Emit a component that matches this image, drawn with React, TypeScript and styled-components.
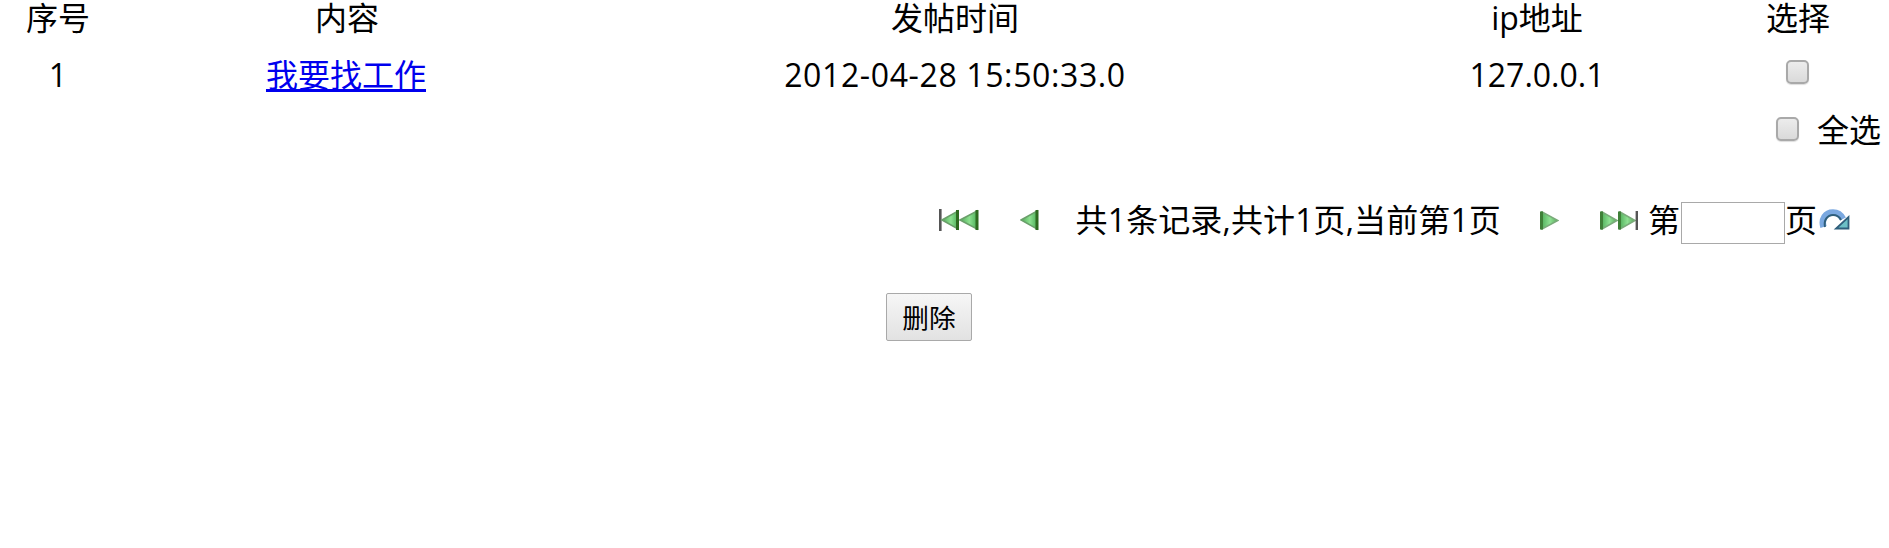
import styled, { createGlobalStyle } from 'styled-components';

const GlobalStyle = createGlobalStyle`
  body {
    margin: 0;
    background: #fff;
    color: #000;
    font-family: 'Open Sans', 'Noto Sans CJK SC', sans-serif;
    font-size: 32px;
  }
`;

const rows = [{ id: 1, title: '我要找工作', time: '2012-04-28 15:50:33.0', ip: '127.0.0.1' }];

function IconDefs() {
  return (
    <svg width="0" height="0" style={{ position: 'absolute' }}>
      <defs>
        <linearGradient id="triLeft" x1="0" y1="0" x2="1" y2="0">
          <stop offset="0" stopColor="#4fa958" />
          <stop offset="0.55" stopColor="#8ce08f" />
          <stop offset="1" stopColor="#4fb05a" />
        </linearGradient>
        <linearGradient id="triRight" x1="0" y1="0" x2="1" y2="0">
          <stop offset="0" stopColor="#55b35f" />
          <stop offset="0.5" stopColor="#8ee092" />
          <stop offset="1" stopColor="#58a95c" />
        </linearGradient>
      </defs>
    </svg>
  );
}

function FirstIcon() {
  return (
    <svg width="40" height="22" viewBox="0 0 40 22">
      <rect x="0" y="0" width="2.6" height="22" fill="#555" />
      <path d="M3 11 L19 2 V20 Z" fill="url(#triLeft)" stroke="#6a9f6a" strokeWidth="1.6" />
      <path d="M21 11 L38 2 V20 Z" fill="url(#triLeft)" stroke="#6a9f6a" strokeWidth="1.6" />
      <rect x="17" y="1" width="3" height="20" fill="#2d6a1f" />
      <rect x="36.5" y="1" width="3" height="20" fill="#2d6a1f" />
    </svg>
  );
}

function PrevIcon() {
  return (
    <svg width="19" height="22" viewBox="0 0 19 22">
      <path d="M1 11 L17 2 V20 Z" fill="url(#triLeft)" stroke="#6a9f6a" strokeWidth="1.6" />
      <rect x="15.5" y="1" width="3" height="20" fill="#2d6a1f" />
    </svg>
  );
}

function NextIcon() {
  return (
    <svg width="19" height="19" viewBox="0 0 19 19">
      <path d="M2 1 L18 9.5 L2 18 Z" fill="url(#triRight)" stroke="#7aab7a" strokeWidth="1.6" />
      <rect x="0" y="0.5" width="3" height="18" fill="#3f8038" />
    </svg>
  );
}

function LastIcon() {
  return (
    <svg width="38" height="19" viewBox="0 0 38 19">
      <path d="M2 1 L17 9.5 L2 18 Z" fill="url(#triRight)" stroke="#7aab7a" strokeWidth="1.6" />
      <rect x="0" y="0.5" width="3" height="18" fill="#3f8038" />
      <path d="M20 1 L35 9.5 L20 18 Z" fill="url(#triRight)" stroke="#7aab7a" strokeWidth="1.6" />
      <rect x="18" y="0.5" width="3" height="18" fill="#3f8038" />
      <rect x="35.6" y="0" width="2.4" height="19" fill="#555" />
    </svg>
  );
}

function GoIcon() {
  return (
    <svg width="31" height="22" viewBox="0 0 31 22">
      <path
        d="M4.5 18 C2 10 6.5 3.5 14 3.5 C19 3.5 22 6 24 10"
        fill="none"
        stroke="#7aa8e0"
        strokeWidth="6.5"
      />
      <path
        d="M6 18 C4.5 11 8.5 6 14 6 C18 6 20.5 8 22 11"
        fill="none"
        stroke="#2f5f7c"
        strokeWidth="2"
      />
      <path d="M17 19.5 H29.5 V8 Z" fill="#6cc0c6" stroke="#2f5f7c" strokeWidth="1.8" />
    </svg>
  );
}

export default function App() {
  return (
    <Page>
      <GlobalStyle />
      <IconDefs />
      <ListTable>
        <thead>
          <tr>
            <HeadCell $width={100}>序号</HeadCell>
            <HeadCell $width={478}>内容</HeadCell>
            <HeadCell $width={738}>发帖时间</HeadCell>
            <HeadCell $width={426}>ip地址</HeadCell>
            <HeadCell $width={96}>选择</HeadCell>
          </tr>
        </thead>
        <tbody>
          {rows.map((row) => (
            <tr key={row.id}>
              <BodyCell>{row.id}</BodyCell>
              <BodyCell>
                <TitleLink href="#">{row.title}</TitleLink>
              </BodyCell>
              <TimeCell>{row.time}</TimeCell>
              <BodyCell>{row.ip}</BodyCell>
              <BodyCell>
                <RowCheckBox type="checkbox" />
              </BodyCell>
            </tr>
          ))}
        </tbody>
      </ListTable>
      <SelectAllRow>
        <CheckBox type="checkbox" />
        <SelectAllLabel>全选</SelectAllLabel>
      </SelectAllRow>
      <Pager>
        <PagerIcon $left={0}>
          <FirstIcon />
        </PagerIcon>
        <PagerIcon $left={41}>
          <PrevIcon />
        </PagerIcon>
        <PagerText>共1条记录,共计1页,当前第1页</PagerText>
        <PagerIcon $left={0}>
          <NextIcon />
        </PagerIcon>
        <PagerIcon $left={41}>
          <LastIcon />
        </PagerIcon>
        <PageWord $left={10}>第</PageWord>
        <PageInput type="text" />
        <PageWord $left={0}>页</PageWord>
        <PagerIcon $left={2}>
          <GoIcon />
        </PagerIcon>
      </Pager>
      <Actions>
        <DeleteButton type="button">删除</DeleteButton>
      </Actions>
    </Page>
  );
}

const Page = styled.div`
  width: 1889px;
  height: 548px;
  padding: 0 8px;
  box-sizing: border-box;
  overflow: hidden;
`;

const ListTable = styled.table`
  border-collapse: collapse;
  table-layout: fixed;
  width: 1838px;
`;

const HeadCell = styled.th<{ $width: number }>`
  width: ${({ $width }) => $width}px;
  height: 36px;
  padding: 0;
  font-weight: 400;
  line-height: 36px;
  text-align: center;
`;

const BodyCell = styled.td`
  height: 78px;
  padding: 0;
  line-height: 42px;
  text-align: center;
`;

const TimeCell = styled(BodyCell)`
  letter-spacing: 0.62px;
`;

const TitleLink = styled.a`
  position: relative;
  left: -1px;
  color: #0000ee;
  text-decoration: underline;
`;

const CheckBox = styled.input`
  appearance: none;
  display: inline-block;
  width: 23px;
  height: 24px;
  margin: 0 0 2px;
  border: 2px solid #a9a9a9;
  border-radius: 5px;
  box-sizing: border-box;
  background: linear-gradient(#ececec, #dadada);
  box-shadow: 0 1px 1px #ddd;
  vertical-align: middle;
`;

const RowCheckBox = styled(CheckBox)`
  margin: 0 0 12px -2px;
`;

const SelectAllRow = styled.div`
  display: flex;
  align-items: center;
  justify-content: flex-end;
  height: 32px;
`;

const SelectAllLabel = styled.span`
  margin-left: 18px;
  line-height: 32px;
`;

const Pager = styled.div`
  display: flex;
  align-items: center;
  justify-content: flex-end;
  height: 42px;
  margin-top: 53px;
  padding-right: 31px;
`;

const PagerIcon = styled.span<{ $left: number }>`
  display: flex;
  margin-left: ${({ $left }) => $left}px;
`;

const PagerText = styled.span`
  margin: 0 39px 0 37px;
  letter-spacing: 0.12px;
  line-height: 42px;
`;

const PageWord = styled.span<{ $left: number }>`
  margin-left: ${({ $left }) => $left}px;
  line-height: 42px;
`;

const PageInput = styled.input`
  align-self: flex-start;
  width: 104px;
  height: 42px;
  margin: 3px 0 0 1px;
  padding: 0;
  border: 1px solid #a9a9a9;
  box-sizing: border-box;
  background: #fff;
`;

const Actions = styled.div`
  display: flex;
  margin-top: 52px;
  padding-left: 878px;
`;

const DeleteButton = styled.button`
  width: 86px;
  height: 48px;
  padding: 0 0 2px;
  border: 1px solid #a9a9a9;
  border-radius: 2px;
  background: linear-gradient(#f6f6f6, #e2e2e2);
  color: #000;
  font-family: 'Open Sans', 'Noto Sans CJK SC', sans-serif;
  font-size: 26.67px;
`;
